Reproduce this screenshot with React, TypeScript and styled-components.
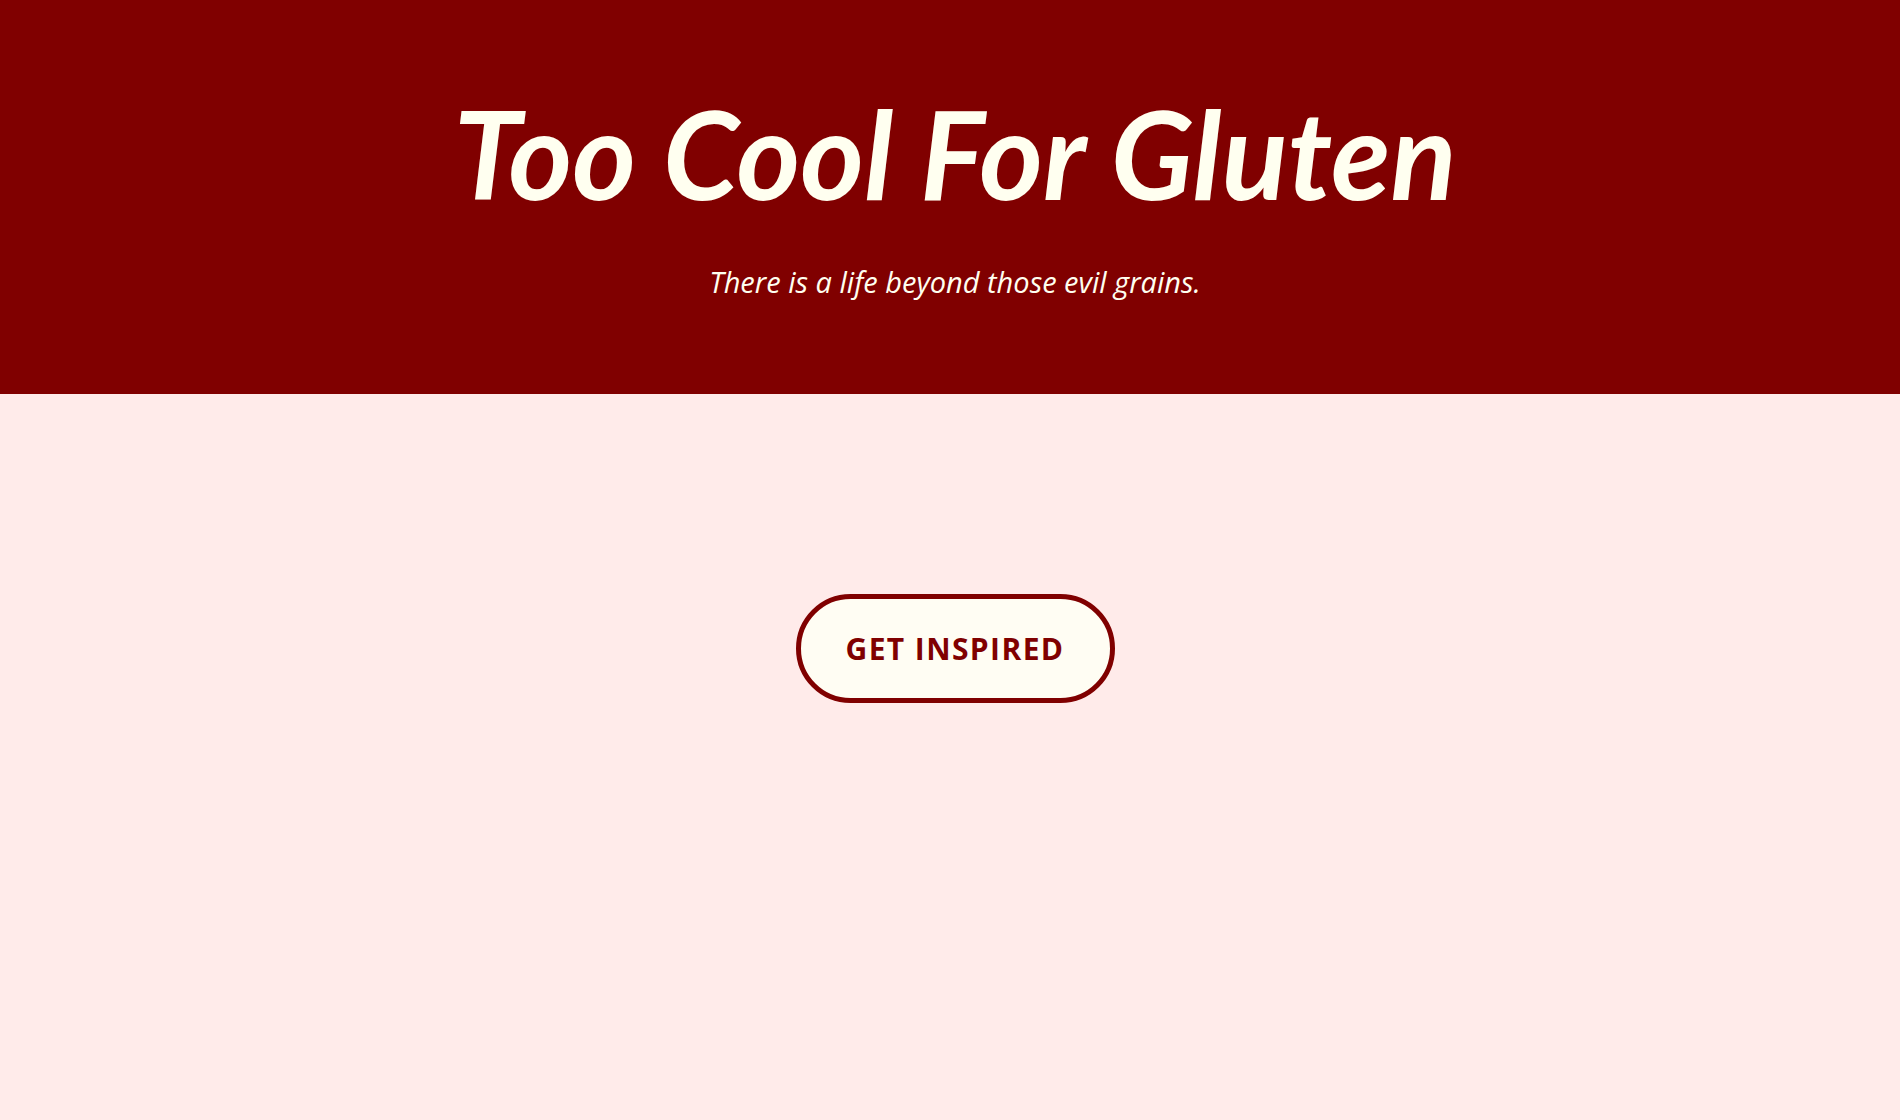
import React from "react";
import styled, { createGlobalStyle } from "styled-components";

const GlobalStyle = createGlobalStyle`
  html, body {
    margin: 0;
    padding: 0;
    background: #ffebea;
  }
  body {
    font-family: "Open Sans", "Liberation Sans", sans-serif;
  }
`;

const Page = styled.div`
  min-height: 1120px;
  display: flex;
  flex-direction: column;
  background: #ffebea;
`;

const Header = styled.header`
  background: #800000;
  height: 394px;
  box-sizing: border-box;
  padding: 80px 0 0 10px;
  display: flex;
  flex-direction: column;
  align-items: center;
`;

const Title = styled.h1`
  margin: 0;
  font-family: Lato, "Liberation Sans", sans-serif;
  font-style: italic;
  font-weight: 700;
  font-size: 122px;
  line-height: 146px;
  color: #fffff0;
`;

const Tagline = styled.p`
  margin: 38px 0 0;
  font-family: "Open Sans", "Liberation Sans", sans-serif;
  font-style: italic;
  font-size: 29px;
  line-height: 36px;
  color: #fffff0;
`;

const Main = styled.main`
  flex: 1;
  display: flex;
  justify-content: center;
  padding: 200px 0 0 10px;
`;

const Button = styled.button`
  box-sizing: border-box;
  width: 319px;
  height: 109px;
  border: 5px solid #800000;
  border-radius: 55px;
  background: #fffdf3;
  color: #800000;
  font-family: "Open Sans", "Liberation Sans", sans-serif;
  font-weight: 700;
  font-size: 30px;
  letter-spacing: 1.4px;
  cursor: pointer;
`;

export default function App() {
  return (
    <Page>
      <GlobalStyle />
      <Header>
        <Title>Too Cool For Gluten</Title>
        <Tagline>There is a life beyond those evil grains.</Tagline>
      </Header>
      <Main>
        <Button>GET INSPIRED</Button>
      </Main>
    </Page>
  );
}
